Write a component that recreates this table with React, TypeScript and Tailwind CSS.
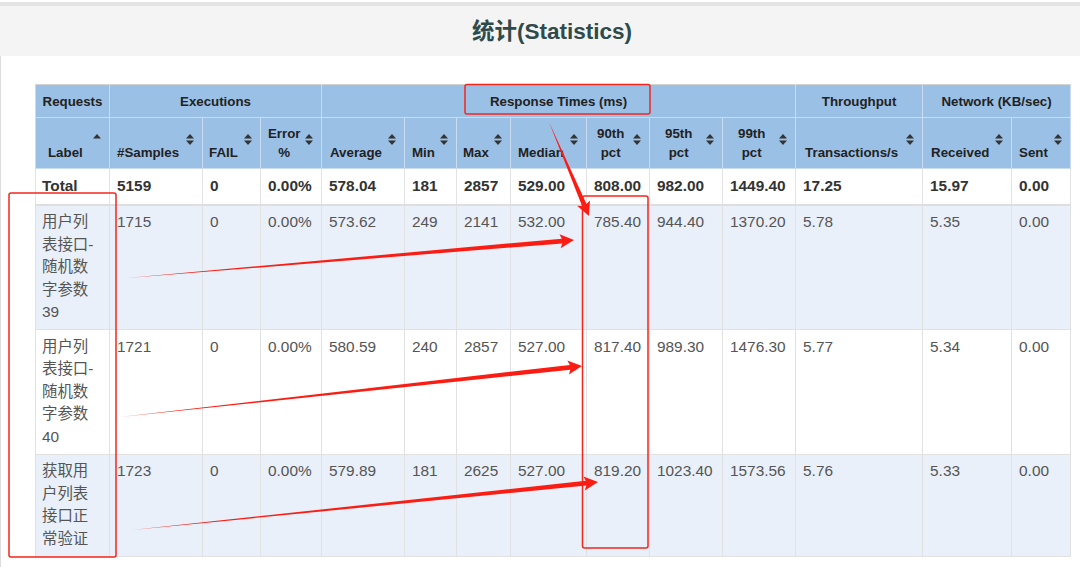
const FONT = "font-['Liberation_Sans','Noto_Sans_CJK_SC',sans-serif]";

type Head = { lines: string[]; pl: string; up?: boolean };

const HEADS: Head[] = [
  { lines: ["Label"], pl: "pl-[12px]", up: true },
  { lines: ["#Samples"], pl: "pl-[7px]" },
  { lines: ["FAIL"], pl: "pl-[6px]" },
  { lines: ["Error", "%"], pl: "pl-[7px]" },
  { lines: ["Average"], pl: "pl-[8px]" },
  { lines: ["Min"], pl: "pl-[7px]" },
  { lines: ["Max"], pl: "pl-[6px]" },
  { lines: ["Median"], pl: "pl-[7px]" },
  { lines: ["90th", "pct"], pl: "pl-[10px]" },
  { lines: ["95th", "pct"], pl: "pl-[15px]" },
  { lines: ["99th", "pct"], pl: "pl-[15px]" },
  { lines: ["Transactions/s"], pl: "pl-[9px]" },
  { lines: ["Received"], pl: "pl-[8px]" },
  { lines: ["Sent"], pl: "pl-[7px]" },
];

const TOTAL = ["Total", "5159", "0", "0.00%", "578.04", "181", "2857", "529.00", "808.00", "982.00", "1449.40", "17.25", "15.97", "0.00"];

const ROWS = [
  ["用户列表接口-随机数字参数39", "1715", "0", "0.00%", "573.62", "249", "2141", "532.00", "785.40", "944.40", "1370.20", "5.78", "5.35", "0.00"],
  ["用户列表接口-随机数字参数40", "1721", "0", "0.00%", "580.59", "240", "2857", "527.00", "817.40", "989.30", "1476.30", "5.77", "5.34", "0.00"],
  ["获取用户列表接口正常验证", "1723", "0", "0.00%", "579.89", "181", "2625", "527.00", "819.20", "1023.40", "1573.56", "5.76", "5.33", "0.00"],
];

function SortIcon({ upOnly }: { upOnly?: boolean }) {
  return (
    <svg width="8" height="11" viewBox="0 0 8 11" className="shrink-0">
      <path d="M0 4.5 L4 0 L8 4.5 Z" fill="#333" />
      {!upOnly && <path d="M0 6.5 L4 11 L8 6.5 Z" fill="#333" />}
    </svg>
  );
}

// red annotation arrow: thin tail tapering to a fat head
function Arrow({ x1, y1, x2, y2 }: { x1: number; y1: number; x2: number; y2: number }) {
  const dx = x2 - x1;
  const dy = y2 - y1;
  const len = Math.hypot(dx, dy);
  const ux = dx / len;
  const uy = dy / len;
  const nx = -uy;
  const ny = ux;
  const L = 12;
  const W = 2.4;
  const H = 7;
  const bx = x2 - ux * L;
  const by = y2 - uy * L;
  const wx = x2 - ux * (L + 2);
  const wy = y2 - uy * (L + 2);
  const pts = [
    [x1, y1],
    [bx + nx * W, by + ny * W],
    [wx + nx * H, wy + ny * H],
    [x2, y2],
    [wx - nx * H, wy - ny * H],
    [bx - nx * W, by - ny * W],
  ]
    .map((p) => p.join(","))
    .join(" ");
  return <polygon points={pts} fill="#fb1d14" />;
}

export default function App() {
  return (
    <div className={`relative h-[567px] w-[1080px] overflow-hidden bg-white ${FONT}`}>
      <div className="h-[2px] bg-white" />
      <div className="h-[4px] bg-[#e4e4e4]" />
      <div className="flex h-[50px] items-center justify-center bg-[#f4f4f4] pl-[24px] pt-[2px]">
        <h1 className="text-[22.5px] font-bold text-[#2f4a4a]">统计(Statistics)</h1>
      </div>

      <div className="h-[511px] border-l border-[#dcdcdc] pl-[34px] pt-[28px]">
        <table className="w-[1035px] table-fixed border-collapse text-left">
          <colgroup>
            <col className="w-[74px]" />
            <col className="w-[93px]" />
            <col className="w-[58px]" />
            <col className="w-[61px]" />
            <col className="w-[83px]" />
            <col className="w-[52px]" />
            <col className="w-[54px]" />
            <col className="w-[76px]" />
            <col className="w-[63px]" />
            <col className="w-[73px]" />
            <col className="w-[73px]" />
            <col className="w-[127px]" />
            <col className="w-[89px]" />
            <col className="w-[59px]" />
          </colgroup>
          <thead className="bg-[#9bc0e6] text-[13.3px] font-bold text-[#222]">
            <tr className="h-[33px]">
              <th className="border border-[#cbdcf0] border-t-[#d3d3d3] pt-[1px] text-center">Requests</th>
              <th colSpan={3} className="border border-[#cbdcf0] border-t-[#d3d3d3] pt-[1px] text-center">Executions</th>
              <th colSpan={7} className="border border-[#cbdcf0] border-t-[#d3d3d3] pt-[1px] text-center">Response Times (ms)</th>
              <th className="border border-[#cbdcf0] border-t-[#d3d3d3] pt-[1px] text-center">Throughput</th>
              <th colSpan={2} className="border border-[#cbdcf0] border-t-[#d3d3d3] pt-[1px] text-center">Network (KB/sec)</th>
            </tr>
            <tr>
              {HEADS.map((h) => (
                <th key={h.lines.join()} className="border border-[#cbdcf0] p-0 font-bold">
                  <div className={`flex h-[50px] items-end justify-between pb-[6px] pr-[8px] leading-[19px] ${h.pl}`}>
                    <div className="inline-flex flex-col items-center whitespace-nowrap">
                      {h.lines.map((l) => (
                        <span key={l}>{l}</span>
                      ))}
                    </div>
                    <div className="self-center pb-[1px]">
                      <SortIcon upOnly={h.up} />
                    </div>
                  </div>
                </th>
              ))}
            </tr>
          </thead>
          <tbody className="text-[15.4px] leading-[22.5px]">
            <tr className="border-b-2 border-[#dedede] bg-white font-bold text-[#333]">
              {TOTAL.map((v, i) => (
                <td
                  key={i}
                  className={`border-x border-[#e3e3e3] py-[6px] align-middle ${i === 0 ? "pl-[6px]" : "pl-[7px]"}`}
                >
                  {v}
                </td>
              ))}
            </tr>
            {ROWS.map((r, ri) => (
              <tr key={ri} className={ri % 2 === 0 ? "bg-[#e9f0f9]" : "bg-white"}>
                {r.map((v, i) => (
                  <td
                    key={i}
                    className={`border border-[#e1e1e1] pb-[5.5px] pt-[5.5px] align-top text-[#555] ${
                      i === 0 ? "pl-[6px] pr-[12px]" : "pl-[7px]"
                    }`}
                  >
                    {v}
                  </td>
                ))}
              </tr>
            ))}
          </tbody>
        </table>
      </div>

      {/* hand-drawn red annotations over the report */}
      <svg className="pointer-events-none absolute inset-0" width="1080" height="567" viewBox="0 0 1080 567">
        <g fill="none" stroke="#f4261c" strokeWidth="1.5">
          <rect x="465" y="84.5" width="185" height="29.5" rx="2" />
          <rect x="9" y="193" width="107" height="364" rx="2" />
          <rect x="582.5" y="196" width="65.5" height="352" rx="2" />
        </g>
        <Arrow x1={549} y1={122} x2={589} y2={216} />
        <Arrow x1={127} y1={278} x2={574} y2={240} />
        <Arrow x1={120} y1={417} x2={582} y2={366} />
        <Arrow x1={132} y1={530} x2={598} y2={482} />
      </svg>
    </div>
  );
}
